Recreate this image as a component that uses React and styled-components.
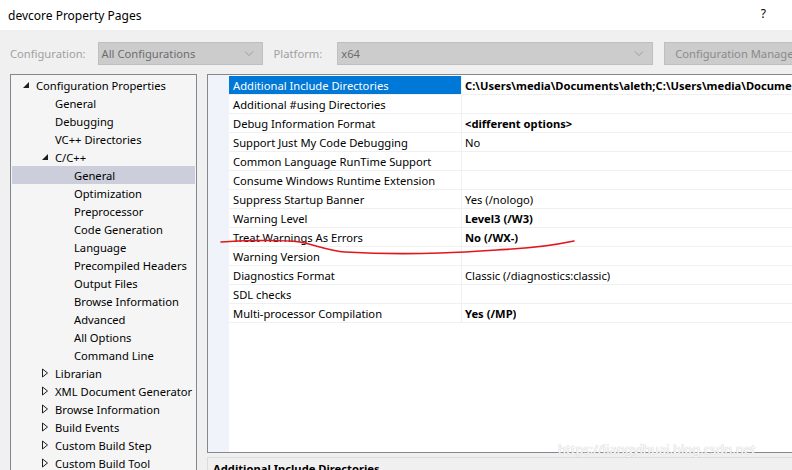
import React from 'react';
import styled, { createGlobalStyle } from 'styled-components';

const GlobalStyle = createGlobalStyle`
  html, body {
    margin: 0;
    padding: 0;
    background: #f0f0f0;
    overflow: hidden;
  }
  body {
    font-family: 'Noto Sans', 'Open Sans', sans-serif;
    font-size: 11.2px;
    color: #000;
  }
`;

const tree = [
  { label: 'Configuration Properties', level: 0, arrow: 'open' },
  { label: 'General', level: 1 },
  { label: 'Debugging', level: 1 },
  { label: 'VC++ Directories', level: 1 },
  { label: 'C/C++', level: 1, arrow: 'open' },
  { label: 'General', level: 2, selected: true },
  { label: 'Optimization', level: 2 },
  { label: 'Preprocessor', level: 2 },
  { label: 'Code Generation', level: 2 },
  { label: 'Language', level: 2 },
  { label: 'Precompiled Headers', level: 2 },
  { label: 'Output Files', level: 2 },
  { label: 'Browse Information', level: 2 },
  { label: 'Advanced', level: 2 },
  { label: 'All Options', level: 2 },
  { label: 'Command Line', level: 2 },
  { label: 'Librarian', level: 1, arrow: 'closed' },
  { label: 'XML Document Generator', level: 1, arrow: 'closed' },
  { label: 'Browse Information', level: 1, arrow: 'closed' },
  { label: 'Build Events', level: 1, arrow: 'closed' },
  { label: 'Custom Build Step', level: 1, arrow: 'closed' },
  { label: 'Custom Build Tool', level: 1, arrow: 'closed' },
];

const props = [
  { name: 'Additional Include Directories', value: 'C:\\Users\\media\\Documents\\aleth;C:\\Users\\media\\Documents\\aleth\\build\\deps\\include', bold: true, selected: true },
  { name: 'Additional #using Directories', value: '' },
  { name: 'Debug Information Format', value: '<different options>', bold: true },
  { name: 'Support Just My Code Debugging', value: 'No' },
  { name: 'Common Language RunTime Support', value: '' },
  { name: 'Consume Windows Runtime Extension', value: '' },
  { name: 'Suppress Startup Banner', value: 'Yes (/nologo)' },
  { name: 'Warning Level', value: 'Level3 (/W3)', bold: true },
  { name: 'Treat Warnings As Errors', value: 'No (/WX-)', bold: true },
  { name: 'Warning Version', value: '' },
  { name: 'Diagnostics Format', value: 'Classic (/diagnostics:classic)' },
  { name: 'SDL checks', value: '' },
  { name: 'Multi-processor Compilation', value: 'Yes (/MP)', bold: true },
];

function Arrow({ kind }) {
  if (kind === 'open') {
    return (
      <svg width="8" height="8" viewBox="0 0 8 8">
        <path d="M7 1 L7 7 L1 7 Z" fill="#1e1e1e" />
      </svg>
    );
  }
  return (
    <svg width="8" height="10" viewBox="0 0 8 10">
      <path d="M1.5 1 L6.5 5 L1.5 9 Z" fill="none" stroke="#1e1e1e" strokeWidth="1" />
    </svg>
  );
}

function Chevron() {
  return (
    <svg width="10" height="6" viewBox="0 0 10 6">
      <path d="M1 0.5 L5 4.5 L9 0.5" fill="none" stroke="#9a9a9a" strokeWidth="1" />
    </svg>
  );
}

export default function App() {
  return (
    <Window>
      <GlobalStyle />
      <TitleBar>
        <Title>devcore Property Pages</Title>
        <Help>?</Help>
      </TitleBar>
      <Toolbar>
        <Label>Configuration:</Label>
        <Combo $width={165}>
          <span>All Configurations</span>
          <Chevron />
        </Combo>
        <Label $gap>Platform:</Label>
        <Combo $width={316}>
          <span>x64</span>
          <Chevron />
        </Combo>
        <Button>Configuration Manager</Button>
      </Toolbar>
      <Main>
        <Tree>
          {tree.map((t, i) => (
            <TreeRow key={i} $selected={t.selected}>
              <Indent $level={t.level}>
                <ArrowBox>{t.arrow && <Arrow kind={t.arrow} />}</ArrowBox>
                {t.label}
              </Indent>
            </TreeRow>
          ))}
        </Tree>
        <Right>
          <Grid>
            <Gutter />
            <Rows>
              {props.map((p, i) => (
                <PropRow key={i}>
                  <NameCell $selected={p.selected}>{p.name}</NameCell>
                  <ValueCell $bold={p.bold}>{p.value}</ValueCell>
                </PropRow>
              ))}
            </Rows>
            <Watermark>https://liangyihuai.blog.csdn.net</Watermark>
          </Grid>
          <Description>Additional Include Directories</Description>
        </Right>
      </Main>
      <Scribble width="792" height="470" viewBox="0 0 792 470">
        <path
          d="M221 242 C 250 240, 285 240, 300 242 C 315 245, 330 251, 345 252 C 380 254, 410 254, 440 253 C 470 252, 495 250, 512 249 C 530 248, 550 246, 574 241"
          fill="none"
          stroke="#e0161b"
          strokeWidth="1.6"
          strokeLinecap="round"
        />
      </Scribble>
    </Window>
  );
}

const Window = styled.div`
  position: relative;
  width: 792px;
  height: 470px;
  overflow: hidden;
  background: #f0f0f0;
`;

const TitleBar = styled.div`
  height: 30px;
  background: #ffffff;
  display: flex;
  align-items: center;
  justify-content: space-between;
  padding: 0 26px 0 8px;
`;

const Title = styled.div`
  font-size: 12px;
  color: #000;
`;

const Help = styled.div`
  font-size: 12px;
  margin-top: -4px;
`;

const Toolbar = styled.div`
  display: flex;
  align-items: center;
  height: 23px;
  margin-top: 12px;
  padding-left: 10px;
  white-space: nowrap;
`;

const Label = styled.div`
  color: #a0a0a0;
  margin-right: ${(p) => (p.$gap ? 15 : 12)}px;
  margin-left: ${(p) => (p.$gap ? 11 : 0)}px;
`;

const Combo = styled.div`
  box-sizing: border-box;
  width: ${(p) => p.$width}px;
  height: 23px;
  background: #cccccc;
  border: 1px solid #bfbfbf;
  display: flex;
  align-items: center;
  justify-content: space-between;
  padding: 0 8px 0 3px;
  color: #6d6d6d;
  flex-shrink: 0;
`;

const Button = styled.div`
  box-sizing: border-box;
  height: 23px;
  margin-left: 11px;
  background: #cccccc;
  border: 1px solid #bfbfbf;
  padding: 0 10px;
  display: flex;
  align-items: center;
  color: #8a8a8a;
  flex-shrink: 0;
`;

const Main = styled.div`
  display: flex;
  margin-top: 9px;
  padding-left: 10px;
  gap: 10px;
`;

const Tree = styled.div`
  box-sizing: border-box;
  width: 187px;
  height: 400px;
  flex-shrink: 0;
  background: #f5f5f5;
  border: 1px solid #828790;
  padding: 1px 1px;
`;

const TreeRow = styled.div`
  height: 18px;
  display: flex;
  align-items: center;
  background: ${(p) => (p.$selected ? '#cccedb' : 'transparent')};
  white-space: nowrap;
`;

const Indent = styled.div`
  display: flex;
  align-items: center;
  padding-left: ${(p) => 10 + p.$level * 19}px;
`;

const ArrowBox = styled.div`
  width: 14px;
  height: 18px;
  display: flex;
  align-items: center;
  justify-content: flex-start;
`;

const Right = styled.div`
  display: flex;
  flex-direction: column;
  flex: 1;
  gap: 4px;
`;

const Grid = styled.div`
  position: relative;
  box-sizing: border-box;
  height: 379px;
  width: 600px;
  background: #ffffff;
  border: 1px solid #828790;
  display: flex;
  padding-top: 1px;
`;

const Gutter = styled.div`
  width: 21px;
  flex-shrink: 0;
  background: #f0f4fa;
  margin-top: -1px;
`;

const Rows = styled.div`
  flex: 1;
  display: flex;
  flex-direction: column;
`;

const PropRow = styled.div`
  display: flex;
  height: 19px;
  box-sizing: border-box;
  border-bottom: 1px solid #f0f0f0;
`;

const NameCell = styled.div`
  width: 233px;
  flex-shrink: 0;
  box-sizing: border-box;
  padding-left: 4px;
  display: flex;
  align-items: center;
  border-right: 1px solid #f0f0f0;
  background: ${(p) => (p.$selected ? '#0078d7' : 'transparent')};
  color: ${(p) => (p.$selected ? '#ffffff' : '#000000')};
  white-space: nowrap;
`;

const ValueCell = styled.div`
  padding-left: 3px;
  display: flex;
  align-items: center;
  white-space: nowrap;
  overflow: hidden;
  font-weight: ${(p) => (p.$bold ? 700 : 400)};
`;

const Watermark = styled.div`
  position: absolute;
  left: 350px;
  bottom: -6px;
  font-size: 13px;
  color: rgba(255, 255, 255, 0.9);
  text-shadow: 0 0 1px #cccccc, 0 0 1px #cccccc;
`;

const Description = styled.div`
  box-sizing: border-box;
  height: 40px;
  border: 1px solid #dcdcdc;
  border-right: none;
  padding: 3px 5px;
  font-weight: 700;
  background: #f0f0f0;
`;

const Scribble = styled.svg`
  position: absolute;
  left: 0;
  top: 0;
  pointer-events: none;
`;
